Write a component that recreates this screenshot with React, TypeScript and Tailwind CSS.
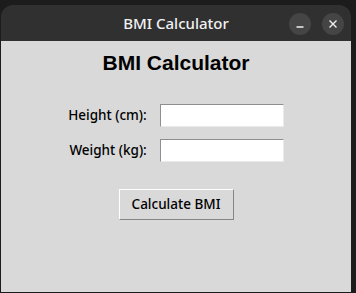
import React, { useState } from 'react';

export default function App() {
  const [height, setHeight] = useState('');
  const [weight, setWeight] = useState('');

  return (
    <div className="w-[356px] h-[293px] bg-[#1c1c1c] pt-[5px] pl-[1px] overflow-hidden font-['Noto_Sans',sans-serif]">
      <div className="w-[350px] rounded-t-[12px] overflow-hidden">
        {/* Title bar */}
        <div className="relative h-[36px] bg-[#303030] flex items-center justify-center">
          <span className="text-[15px] font-medium text-[#f2f2f2] leading-none">BMI Calculator</span>
          <div className="absolute right-[7px] top-[8px] flex gap-[11px]">
            <button className="w-[22px] h-[22px] rounded-full bg-[#454545] flex items-center justify-center">
              <svg width="10" height="10" viewBox="0 0 10 10">
                <path d="M1.5 8 H8.5" stroke="#f0f0f0" strokeWidth="1.4" />
              </svg>
            </button>
            <button className="w-[22px] h-[22px] rounded-full bg-[#454545] flex items-center justify-center">
              <svg width="10" height="10" viewBox="0 0 10 10">
                <path d="M1.5 1.5 L8.5 8.5 M8.5 1.5 L1.5 8.5" stroke="#f0f0f0" strokeWidth="1.4" />
              </svg>
            </button>
          </div>
        </div>

        {/* Content */}
        <div className="h-[251px] bg-[#d9d9d9] flex flex-col items-center">
          <h1 className="mt-[10px] text-[21px] leading-[24px] font-bold text-black font-['Liberation_Sans',Arial,sans-serif]">
            BMI Calculator
          </h1>

          <div className="mt-[29px] grid grid-cols-[auto_124px] gap-x-[13px] gap-y-[12px] items-center text-[13.5px] font-medium text-black">
            <label className="justify-self-end">Height (cm):</label>
            <input
              value={height}
              onChange={e => setHeight(e.target.value)}
              className="h-[23px] bg-white border border-t-[#8e8e8e] border-l-[#8e8e8e] border-b-[#eaeaea] border-r-[#eaeaea] outline-none px-1 text-[14px]"
            />
            <label className="justify-self-end">Weight (kg):</label>
            <input
              value={weight}
              onChange={e => setWeight(e.target.value)}
              className="h-[23px] bg-white border border-t-[#8e8e8e] border-l-[#8e8e8e] border-b-[#eaeaea] border-r-[#eaeaea] outline-none px-1 text-[14px]"
            />
          </div>

          <button className="mt-[27px] w-[115px] h-[31px] bg-[#d9d9d9] border border-t-white border-l-white border-b-[#858585] border-r-[#858585] text-[13.5px] font-medium text-black">
            Calculate BMI
          </button>
        </div>
      </div>
    </div>
  );
}
